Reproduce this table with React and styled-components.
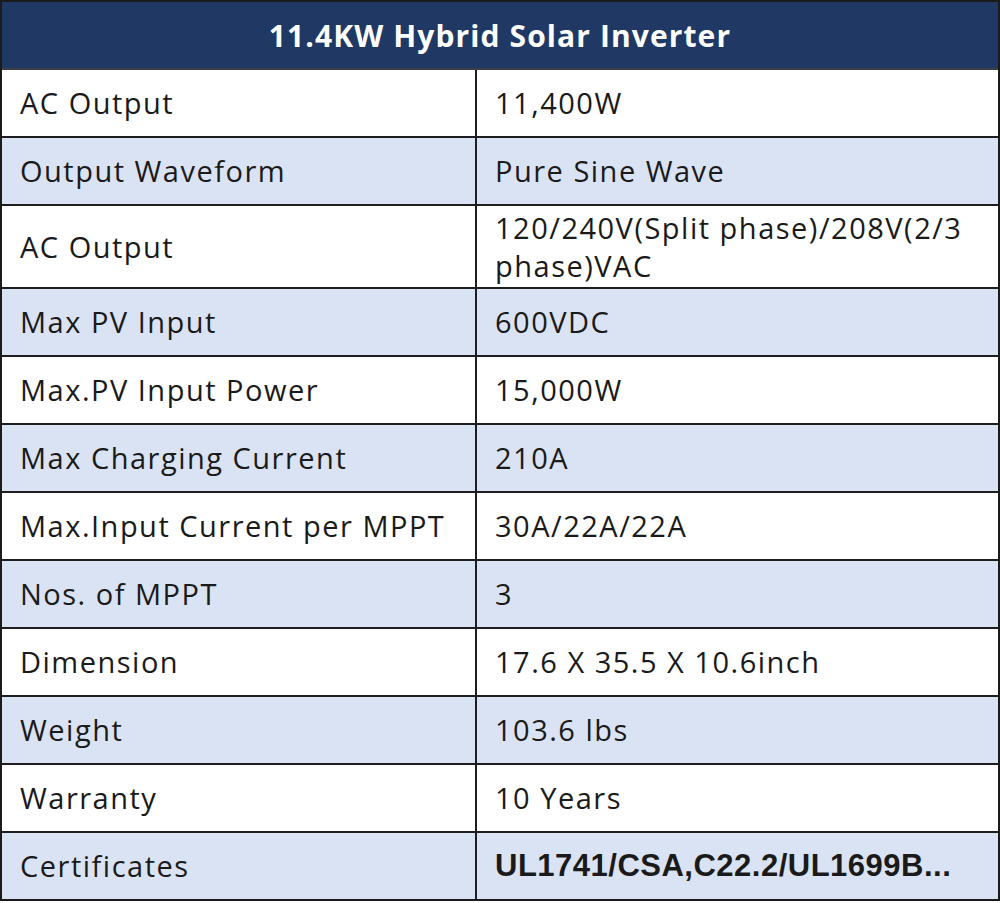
import React from "react";
import styled, { createGlobalStyle } from "styled-components";

const Global = createGlobalStyle`
  html, body { margin: 0; padding: 0; background: #ffffff; }
  body { font-family: "Open Sans", "Noto Sans", sans-serif; }
`;

const Table = styled.div`
  width: 1000px;
  box-sizing: border-box;
  border: 2px solid #1b1b1b;
  display: flex;
  flex-direction: column;
`;

const Header = styled.div`
  height: 66px;
  background: #1f3864;
  border-bottom: 2px solid #3a3f48;
  display: flex;
  align-items: center;
  justify-content: center;
  color: #ffffff;
  font-weight: 700;
  font-size: 30px;
  letter-spacing: 1.1px;
`;

const Row = styled.div`
  display: grid;
  grid-template-columns: 473px 1fr;
  min-height: ${(p) => (p.$tall ? 81 : 66)}px;
  background: ${(p) => (p.$alt ? "#dae3f3" : "#ffffff")};
  border-bottom: ${(p) => (p.$last ? "none" : "2px solid #1e1e1e")};
`;

const Cell = styled.div`
  display: flex;
  align-items: center;
  padding: 0 6px 0 18px;
  font-size: ${(p) => (p.$bold ? 31 : 29)}px;
  line-height: 38px;
  letter-spacing: ${(p) => (p.$bold ? 0.5 : 1.5)}px;
  white-space: ${(p) => (p.$right ? "normal" : "nowrap")};
  color: #1a1a1a;
  border-left: ${(p) => (p.$right ? "2px solid #1e1e1e" : "none")};
  font-family: ${(p) => (p.$bold ? '"Liberation Sans", Arial, sans-serif' : 'inherit')};
  font-weight: ${(p) => (p.$bold ? 700 : 400)};
`;

const rows = [
  ["AC Output", "11,400W"],
  ["Output Waveform", "Pure Sine Wave"],
  ["AC Output", "120/240V(Split phase)/208V(2/3 phase)VAC", true],
  ["Max PV Input", "600VDC"],
  ["Max.PV Input Power", "15,000W"],
  ["Max Charging Current", "210A"],
  ["Max.Input Current per MPPT", "30A/22A/22A"],
  ["Nos. of MPPT", "3"],
  ["Dimension", "17.6 X 35.5 X 10.6inch"],
  ["Weight", "103.6 lbs"],
  ["Warranty", "10 Years"],
  ["Certificates", "UL1741/CSA,C22.2/UL1699B...", false, true],
];

export default function App() {
  return (
    <>
      <Global />
      <Table>
        <Header>11.4KW Hybrid Solar Inverter</Header>
        {rows.map(([k, v, tall, bold], i) => (
          <Row key={i} $alt={i % 2 === 1} $tall={tall} $last={i === rows.length - 1}>
            <Cell>{k}</Cell>
            <Cell $right $bold={bold}>{v}</Cell>
          </Row>
        ))}
      </Table>
    </>
  );
}
